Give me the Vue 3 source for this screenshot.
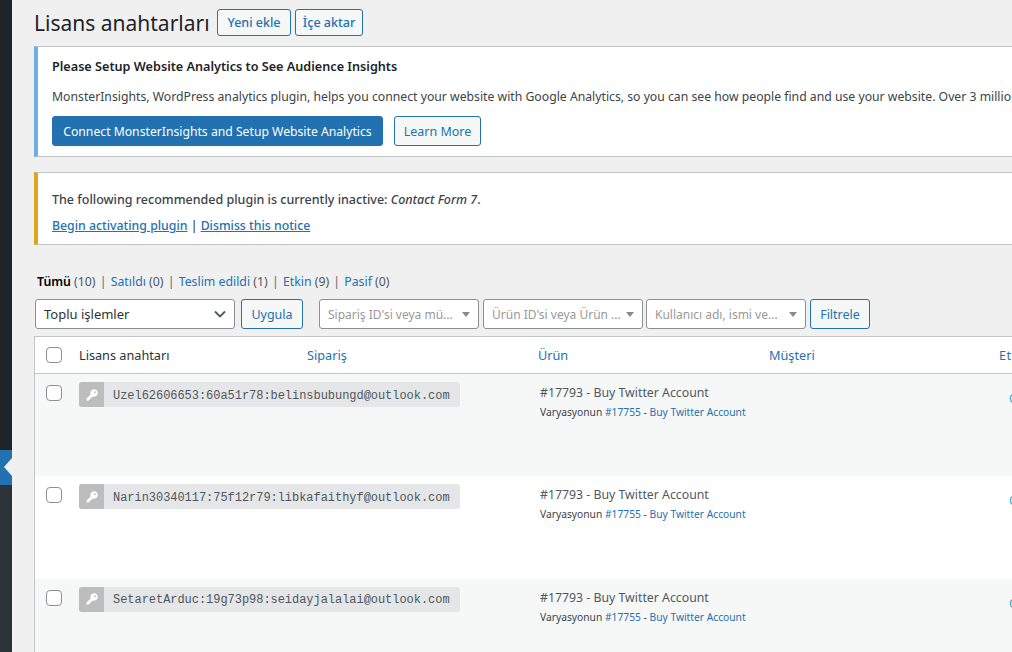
<template>
  <div class="page">
    <aside class="side">
      <div class="side-top"></div>
      <div class="side-tab"><span class="arrow"></span></div>
      <div class="side-rest"></div>
    </aside>

    <main class="main">
      <div class="head">
        <h1>Lisans anahtarları</h1>
        <a class="btn head-btn">Yeni ekle</a>
        <a class="btn head-btn">İçe aktar</a>
      </div>

      <div class="notice blue">
        <p class="strong">Please Setup Website Analytics to See Audience Insights</p>
        <p class="desc">MonsterInsights, WordPress analytics plugin, helps you connect your website with Google Analytics, so you can see how people find and use your website. Over 3 million users</p>
        <div class="notice-btns">
          <a class="btn primary">Connect MonsterInsights and Setup Website Analytics</a>
          <a class="btn learn">Learn More</a>
        </div>
      </div>

      <div class="notice yellow">
        <p class="inactive">The following recommended plugin is currently inactive: <em>Contact Form 7</em>.</p>
        <p class="links"><a>Begin activating plugin</a> | <a>Dismiss this notice</a></p>
      </div>

      <ul class="subs">
        <li v-for="(s, i) in tabs" :key="s.name">
          <a :class="{ current: i === 0 }">{{ s.name }}</a>
          <span class="count"> ({{ s.count }})</span>
          <span v-if="i < tabs.length - 1" class="sep"> | </span>
        </li>
      </ul>

      <div class="filters">
        <div class="select bulk">
          <span>Toplu işlemler</span>
          <svg width="14" height="14" viewBox="0 0 14 14"><path d="M2 4.5 7 9.5 12 4.5" fill="none" stroke="#50575e" stroke-width="1.8" /></svg>
        </div>
        <button class="btn apply">Uygula</button>
        <div v-for="f in filters" :key="f" class="select filter">
          <span class="ph">{{ f }}</span>
          <i class="caret"></i>
        </div>
        <button class="btn filter-btn">Filtrele</button>
      </div>

      <div class="table">
        <div class="row header">
          <div class="check"><span class="box"></span></div>
          <div class="plain">Lisans anahtarı</div>
          <a>Sipariş</a>
          <a>Ürün</a>
          <a>Müşteri</a>
          <a class="last-col">Etkin</a>
        </div>
        <div v-for="(r, i) in rows" :key="r" class="row item" :class="{ alt: i % 2 === 0 }">
          <div class="check"><span class="box"></span></div>
          <div class="key-cell">
            <div class="chip">
              <span class="key-ico">
                <svg width="14" height="14" viewBox="0 0 14 14">
                  <path d="M9 1.2a3.8 3.8 0 1 1-1.5 7.3L3.6 12.6 1.5 12.8l.1-2.2 4.1-4A3.8 3.8 0 0 1 9 1.2Z" fill="#fff" />
                  <circle cx="10" cy="4.2" r="1" fill="#c3c4c7" />
                </svg>
              </span>
              <code>{{ r }}</code>
            </div>
          </div>
          <div></div>
          <div class="product">
            <p class="prod-main">#17793 - Buy Twitter Account</p>
            <p class="prod-sub">Varyasyonun <span class="var-id">#17755</span> - <a>Buy Twitter Account</a></p>
          </div>
          <div></div>
          <div class="status"><span>Oluşturuldu</span></div>
        </div>
      </div>
    </main>
  </div>
</template>

<script setup>
const tabs = [
  { name: "Tümü", count: 10 },
  { name: "Satıldı", count: 0 },
  { name: "Teslim edildi", count: 1 },
  { name: "Etkin", count: 9 },
  { name: "Pasif", count: 0 },
];

const filters = ["Sipariş ID'si veya mü...", "Ürün ID'si veya Ürün ...", "Kullanıcı adı, ismi ve..."];

const rows = [
  "Uzel62606653:60a51r78:belinsbubungd@outlook.com",
  "Narin30340117:75f12r79:libkafaithyf@outlook.com",
  "SetaretArduc:19g73p98:seidayjalalai@outlook.com",
];
</script>

<style>
html,
body {
  margin: 0;
  height: 100%;
  overflow: hidden;
  background: #f0f0f1;
}
</style>

<style scoped>
.page {
  display: flex;
  width: 1500px;
  height: 652px;
  overflow: hidden;
  background: #f0f0f1;
  font-family: "Noto Sans", "Open Sans", sans-serif;
  font-size: 12.5px;
  color: #3c434a;
}

/* left menu stub */
.side {
  width: 12px;
  flex: none;
  display: flex;
  flex-direction: column;
  background: #1d2327;
}
.side-top {
  height: 450px;
}
.side-tab {
  height: 35px;
  background: #2271b1;
  position: relative;
}
.arrow {
  position: absolute;
  left: 4px;
  top: 8px;
  border: 9px solid transparent;
  border-left: 0;
  border-right: 8px solid #f0f0f1;
}
.side-rest {
  flex: 1;
  background: #2c3338;
}

.main {
  width: 1466px;
  margin-left: 22px;
  flex: none;
}

/* title */
.head {
  display: flex;
  align-items: center;
  height: 46px;
  padding-bottom: 1px;
  box-sizing: border-box;
}
h1 {
  width: 183px;
  margin: 0;
  font-size: 21px;
  font-weight: 400;
  color: #1d2327;
  line-height: 30px;
  white-space: nowrap;
}

a {
  color: #2271b1;
}

.btn {
  box-sizing: border-box;
  display: inline-flex;
  align-items: center;
  justify-content: center;
  border: 1px solid #2271b1;
  border-radius: 3px;
  background: #f6f7f7;
  color: #2271b1;
  font-family: inherit;
  font-size: 12.5px;
  padding: 0;
}
.head-btn {
  height: 27px;
  width: 74px;
  margin-right: 4px;
  font-weight: 500;
}
.head-btn + .head-btn {
  width: 68px;
}

/* notices */
.notice {
  background: #fff;
  border: 1px solid #c3c4c7;
  border-left-width: 4px;
  padding: 0 14px;
  box-sizing: border-box;
}
.notice p {
  margin: 0;
}
.notice.blue {
  border-left-color: #72aee6;
  height: 111px;
  padding-top: 11px;
}
.notice.yellow {
  border-left-color: #dba617;
  height: 73px;
  margin-top: 15px;
  padding-top: 17px;
}
.strong {
  font-size: 12.65px;
  font-weight: 600;
  color: #1d2327;
  line-height: 17px;
}
.desc {
  margin-top: 13px !important;
  font-size: 12.22px;
  line-height: 17px;
  white-space: nowrap;
}
.notice-btns {
  display: flex;
  gap: 11px;
  margin-top: 11px;
}
.primary {
  width: 331px;
  height: 30px;
  background: #2271b1;
  color: #fff;
  font-size: 12.2px;
}
.learn {
  width: 87px;
  height: 30px;
}
.inactive {
  font-size: 12.5px;
  font-weight: 500;
  line-height: 19px;
}
.links {
  margin-top: 8px !important;
  font-size: 12.3px;
  font-weight: 500;
  line-height: 17px;
}
.links a {
  text-decoration: underline;
}

/* status links */
.subs {
  list-style: none;
  display: flex;
  margin: 28px 0 0 3px;
  padding: 0;
  height: 18px;
  line-height: 18px;
  font-size: 12.3px;
  white-space: pre;
}
.subs .current {
  color: #000;
  font-weight: 600;
}
.count {
  color: #50575e;
}
.sep {
  color: #646970;
  padding: 0 1px;
}

/* filter bar */
.filters {
  display: flex;
  align-items: center;
  height: 30px;
  margin: 8px 0 0 1px;
}
.select {
  box-sizing: border-box;
  height: 30px;
  display: flex;
  align-items: center;
  justify-content: space-between;
  background: #fff;
  border: 1px solid #8c8f94;
  border-radius: 3px;
  padding: 0 8px;
}
.bulk {
  width: 200px;
  font-size: 13px;
  color: #2c3338;
}
.bulk svg {
  margin-right: -1px;
}
.apply {
  width: 62px;
  height: 30px;
  margin: 0 16px 0 6px;
}
.filter {
  width: 160px;
  margin-right: 4px;
  font-size: 12px;
  padding-right: 4px;
}
.filter + .filter {
  margin-right: 3px;
}
.filter + .filter + .filter {
  margin-right: 4px;
}
.ph {
  color: #999;
  white-space: nowrap;
  overflow: hidden;
}
.caret {
  flex: none;
  margin: 0 4px 0 0;
  border: 4.5px solid transparent;
  border-top: 5px solid #888;
  border-bottom: 0;
}
.filter-btn {
  width: 60px;
  height: 30px;
}

/* table */
.table {
  margin-top: 7px;
  border: 1px solid #c3c4c7;
  border-right: 0;
  background: #fff;
}
.row {
  display: grid;
  grid-template-columns: 44px 228px 231px 231px 230px 1fr;
}
.header {
  height: 36px;
  align-items: center;
  background: #fff;
  border-bottom: 1px solid #c3c4c7;
  font-size: 12.7px;
}
.plain {
  color: #2c3338;
}
.last-col {
  letter-spacing: 0.5px;
}
.check {
  padding-left: 11px;
}
.box {
  display: block;
  box-sizing: border-box;
  width: 16px;
  height: 16px;
  background: #fff;
  border: 1px solid #8c8f94;
  border-radius: 4px;
}
.item {
  height: 102.4px;
  background: #fff;
  box-sizing: border-box;
}
.item.alt {
  background: #f6f7f7;
}
.item .check {
  padding-top: 11px;
}
.key-cell {
  padding-top: 8px;
  position: relative;
}
.chip {
  display: flex;
  align-items: center;
  width: 381px;
  height: 25px;
  background: #e5e6e7;
  border-radius: 3px;
  position: absolute;
}
.key-ico {
  width: 25px;
  height: 25px;
  display: flex;
  align-items: center;
  justify-content: center;
  background: #bdbdbd;
  border-radius: 3px 0 0 3px;
}
code {
  margin: 2px 0 0 9px;
  font-family: "Liberation Mono", "DejaVu Sans Mono", monospace;
  font-size: 12px;
  letter-spacing: -0.04px;
  color: #50575e;
  white-space: nowrap;
}
.product {
  padding: 10px 0 0 2px;
  white-space: nowrap;
}
.product p {
  margin: 0;
}
.prod-main {
  line-height: 17px;
  font-size: 12.3px;
  color: #50575e;
}
.prod-sub {
  margin-top: 4px !important;
  font-size: 10.25px;
  line-height: 14px;
}
.var-id {
  color: #2271b1;
}
.status {
  padding: 16px 0 0 10px;
  color: #2ea2cc;
  font-size: 12px;
}
</style>
